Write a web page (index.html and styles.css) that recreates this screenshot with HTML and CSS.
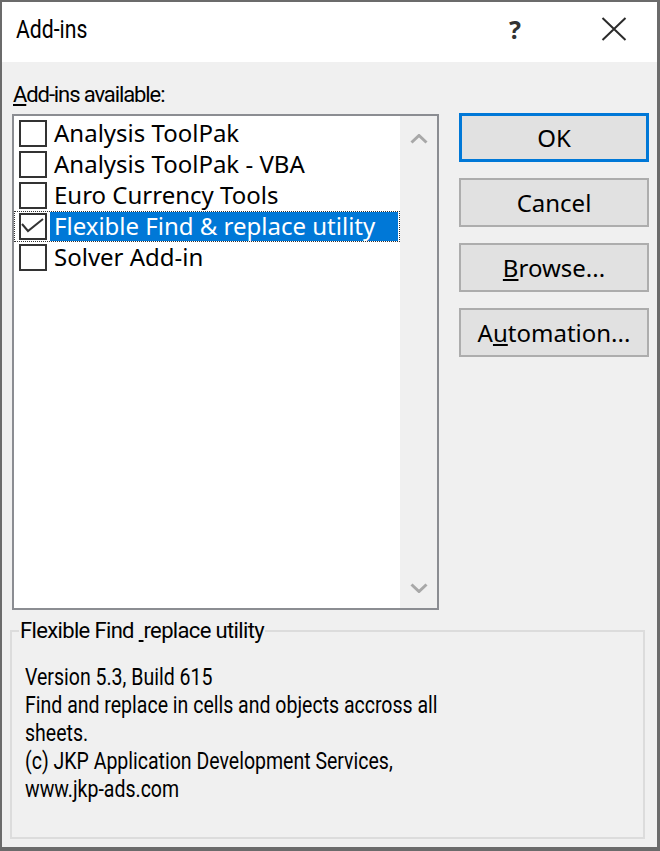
FILE: index.html
```html
<!DOCTYPE html>
<html>
<head>
<meta charset="utf-8">
<link rel="stylesheet" href="styles.css">
</head>
<body>
<div class="window">
  <div class="titlebar">
    <span class="title">Add-ins</span>
    <span class="help">?</span>
    <span class="close">
      <svg width="26" height="24" viewBox="0 0 26 24"><path d="M1.5 1 L24.5 23 M24.5 1 L1.5 23" stroke="#2b2b2b" stroke-width="2" fill="none"/></svg>
    </span>
  </div>
  <div class="content">
    <div class="label"><u>A</u>dd-ins available:</div>
    <div class="main">
      <div class="listbox">
        <div class="items">
          <div class="item"><span class="cb"></span><span class="text">Analysis ToolPak</span></div>
          <div class="item"><span class="cb"></span><span class="text">Analysis ToolPak - VBA</span></div>
          <div class="item"><span class="cb"></span><span class="text">Euro Currency Tools</span></div>
          <div class="item focused"><span class="cb"><svg width="24" height="23" viewBox="0 0 24 23"><path d="M1 9 L7 16 L22 4" stroke="#333" stroke-width="2" fill="none"/></svg></span><span class="text selected">Flexible Find &amp; replace utility</span></div>
          <div class="item"><span class="cb"></span><span class="text">Solver Add-in</span></div>
        </div>
        <div class="scrollbar">
          <span class="arrow up"><svg width="18" height="10" viewBox="0 0 18 10"><path d="M1.5 8.5 L9 1.5 L16.5 8.5" stroke="#a8a8a8" stroke-width="3" fill="none"/></svg></span>
          <span class="arrow down"><svg width="18" height="10" viewBox="0 0 18 10"><path d="M1.5 1.5 L9 8.5 L16.5 1.5" stroke="#a8a8a8" stroke-width="3" fill="none"/></svg></span>
        </div>
      </div>
      <div class="buttons">
        <div class="btn default">OK</div>
        <div class="btn">Cancel</div>
        <div class="btn"><u>B</u>rowse...</div>
        <div class="btn">A<u>u</u>tomation...</div>
      </div>
    </div>
    <fieldset class="group">
      <legend>Flexible Find <u>&nbsp;</u>replace utility</legend>
      <p class="desc">Version 5.3, Build 615<br>Find and replace in cells and objects accross all<br>sheets.<br>(c) JKP Application Development Services,<br>www.jkp-ads.com</p>
    </fieldset>
  </div>
</div>
</body>
</html>
```

FILE: styles.css
```css
html, body {
  margin: 0;
  padding: 0;
  background: #f0f0f0;
}

.window {
  width: 660px;
  height: 851px;
  box-sizing: border-box;
  border: 2px solid #6b6b6b;
  border-right-width: 3px;
  border-bottom-width: 4px;
  background: #f0f0f0;
  display: flex;
  flex-direction: column;
  font-family: "Noto Sans", "Open Sans", sans-serif;
  color: #000;
}

.titlebar {
  height: 60px;
  background: #fff;
  display: flex;
  align-items: center;
  flex-shrink: 0;
}

.title {
  flex: 1;
  margin-left: 14px;
  font-family: Roboto, "Noto Sans", sans-serif;
  font-size: 26.5px;
  line-height: 30px;
  padding-bottom: 6px;
  transform: scaleX(0.8);
  transform-origin: left center;
}

.help {
  width: 40px;
  text-align: center;
  font-size: 25px;
  font-weight: bold;
  color: #333;
  line-height: 30px;
  padding-bottom: 6px;
}

.close {
  width: 40px;
  margin-left: 59px;
  margin-right: 23px;
  display: flex;
  justify-content: center;
  padding-bottom: 6px;
}

.content {
  flex: 1;
  display: flex;
  flex-direction: column;
  padding: 0 8px 0 10px;
}

.label {
  margin-top: 20px;
  margin-bottom: 6px;
  padding-left: 1px;
  font-family: Roboto, "Noto Sans", sans-serif;
  font-size: 22px;
  letter-spacing: -1.1px;
  line-height: 26px;
}

.main {
  display: flex;
  gap: 20px;
}

.listbox {
  width: 427px;
  height: 496px;
  box-sizing: border-box;
  border: 2px solid #8b8d92;
  background: #fff;
  display: flex;
}

.items {
  flex: 1;
  padding-top: 2px;
}

.item {
  height: 31px;
  display: flex;
  align-items: center;
  font-size: 24px;
}

.item.focused {
  outline: 1px dotted #333;
  outline-offset: -1px;
}

.cb {
  width: 28px;
  height: 27px;
  box-sizing: border-box;
  border: 2px solid #333;
  background: #fff;
  margin-left: 5px;
  flex-shrink: 0;
}

.cb svg {
  display: block;
}

.text {
  flex: 1;
  margin-left: 3px;
  margin-right: 2px;
  padding-left: 4px;
  height: 29px;
  line-height: 27px;
  white-space: nowrap;
}

.text.selected {
  background: #0078d7;
  color: #fff;
}

.scrollbar {
  width: 37px;
  background: #f0f0f0;
  display: flex;
  flex-direction: column;
  justify-content: space-between;
}

.arrow {
  display: flex;
  justify-content: center;
  align-items: center;
}

.arrow.up {
  height: 46px;
}

.arrow.down {
  height: 40px;
}

.buttons {
  width: 190px;
  display: flex;
  flex-direction: column;
  gap: 16px;
  margin-top: -1px;
}

.btn {
  height: 49px;
  box-sizing: border-box;
  border: 2px solid #adadad;
  background: #e1e1e1;
  display: flex;
  align-items: center;
  justify-content: center;
  font-size: 24px;
}

.btn.default {
  border: 3px solid #0078d7;
}

.group {
  margin: 7px 4px 8px -2px;
  padding: 0 0 0 13px;
  border: 2px solid #dcdcdc;
  height: 222px;
  box-sizing: border-box;
  min-width: 0;
}

.group legend {
  margin-left: -6px;
  padding: 0 1px;
  font-family: Roboto, "Noto Sans", sans-serif;
  font-size: 22px;
  letter-spacing: -0.65px;
  line-height: 28px;
}

.desc {
  margin: 18px 0 0 0;
  font-family: Roboto, "Noto Sans", sans-serif;
  font-size: 23.5px;
  line-height: 28px;
  transform: scaleX(0.83);
  transform-origin: left top;
}
```
